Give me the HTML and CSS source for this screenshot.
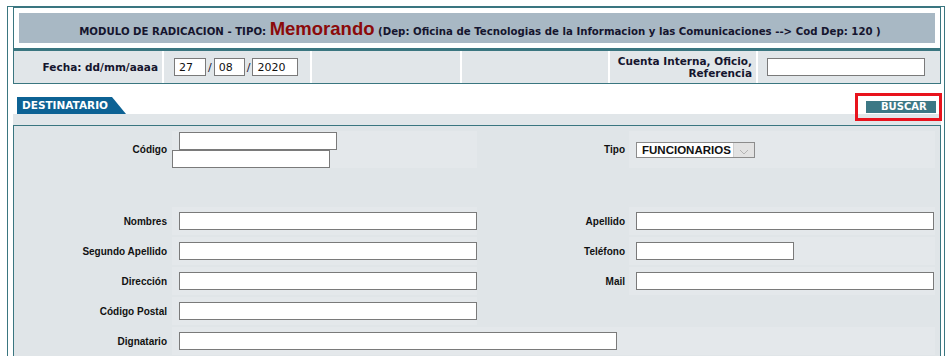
FILE: index.html
```
<!DOCTYPE html>
<html>
    <head>
        <title>Radicacion - Memorando</title>
        <meta charset="UTF-8">
        <link rel="stylesheet" href="styles.css">
    </head>
    <body>
        <div id="frame">
            <div id="head">
                <div id="title">MODULO DE RADICACION - TIPO: <span id="tipo">Memorando</span> (Dep: Oficina de Tecnologias de la Informacion y las Comunicaciones --&gt; Cod Dep: 120 )</div>
            </div>

            <div id="date-row">
                <div class="cell lbl">Fecha: dd/mm/aaaa</div>
                <div class="cell dates">
                    <input class="in dd" type="text" value="27"><span class="sep">/</span><input class="in mm" type="text" value="08"><span class="sep">/</span><input class="in yy" type="text" value="2020">
                </div>
                <div class="cell"></div>
                <div class="cell"></div>
                <div class="cell lbl ref">Cuenta Interna, Oficio,<br>Referencia</div>
                <div class="cell field"><input class="in short" type="text"></div>
            </div>

            <div id="tabs">
                <span class="tab">DESTINATARIO</span>
                <span class="buscar">BUSCAR</span>
            </div>
            <div id="band"></div>

            <div id="box">
                <div id="form">
                    <div class="flbl">Código</div>
                    <div class="fin stack">
                        <input class="in short first" type="text">
                        <input class="in short" type="text">
                    </div>
                    <div class="flbl right">Tipo</div>
                    <div class="fin">
                        <span class="sel">FUNCIONARIOS<span class="arrow"><svg width="10" height="6" viewBox="0 0 10 6"><path d="M1 1 L5 5 L9 1" fill="none" stroke="#b4b4b4" stroke-width="1"/></svg></span></span>
                    </div>

                    <div class="gap"></div>

                    <div class="flbl">Nombres</div>
                    <div class="fin"><input class="in long" type="text"></div>
                    <div class="flbl right">Apellido</div>
                    <div class="fin"><input class="in long" type="text"></div>

                    <div class="flbl">Segundo Apellido</div>
                    <div class="fin"><input class="in long" type="text"></div>
                    <div class="flbl right">Teléfono</div>
                    <div class="fin"><input class="in short" type="text"></div>

                    <div class="flbl">Dirección</div>
                    <div class="fin"><input class="in long" type="text"></div>
                    <div class="flbl right">Mail</div>
                    <div class="fin"><input class="in long" type="text"></div>

                    <div class="flbl">Código Postal</div>
                    <div class="fin"><input class="in long" type="text"></div>
                    <div class="blank"></div>

                    <div class="flbl">Dignatario</div>
                    <div class="fin wide"><input class="in xlong" type="text"></div>
                </div>
            </div>
        </div>
    </body>
</html>
```

FILE: styles.css
```
html, body {
    margin: 0;
    overflow: hidden;
    background-color: white;
}

body {
    font-family: "DejaVu Sans", Verdana, sans-serif;
    font-size: 10px;
    color: #15152e;
}

#frame {
    display: flex;
    flex-direction: column;
    width: 938px;
    height: 350px;
    box-sizing: border-box;
    margin: 6px 0 0 7px;
    padding: 0 3px 0 5px;
    border: 1px solid #3a7680;
    border-bottom: none;
}

/* header */

#head {
    border: 1px solid #3a7680;
    padding: 5px;
    background-color: white;
}

#title {
    height: 30px;
    box-sizing: border-box;
    padding-top: 6px;
    padding-left: 6px;
    line-height: 22px;
    background-color: #a8b8c4;
    text-align: center;
    font-weight: bold;
    font-size: 10.2px;
    white-space: nowrap;
}

#tipo {
    font-family: "Liberation Sans", Arial, sans-serif;
    font-size: 18.5px;
    color: #8b0a0a;
    line-height: 20px;
}

/* fecha row */

#date-row {
    display: grid;
    grid-template-columns: 148px 146px 148px 146px 146px 1fr;
    column-gap: 2px;
    height: 35px;
    box-sizing: border-box;
    border: 1px solid #3a7680;
    border-top-width: 2px;
    background-color: white;
}

#date-row .cell {
    background-color: #e1e6e9;
    display: flex;
    align-items: center;
}

#date-row .lbl {
    justify-content: flex-end;
    padding-right: 4px;
    font-weight: bold;
    font-size: 10.5px;
    text-align: right;
    line-height: 12px;
}

#date-row .dates {
    padding-left: 10px;
}

#date-row .field {
    padding-left: 9px;
}

.sep {
    font-size: 11px;
    margin: 0 2px;
}

.in {
    height: 18px;
    box-sizing: border-box;
    margin: 0;
    padding: 0 4px;
    border: 1px solid #7a7a7a;
    border-radius: 0;
    background-color: white;
    font-family: "DejaVu Sans", Verdana, sans-serif;
    font-size: 11px;
    color: #111;
    outline: none;
}

.dd { width: 32px; }
.mm { width: 31px; }
.yy { width: 46px; }
.short { width: 158px; }
.long { width: 298px; }
.xlong { width: 438px; }

/* destinatario */

#tabs {
    display: flex;
    justify-content: space-between;
    align-items: flex-end;
    margin-top: 13px;
    padding: 0 5px 0 4px;
}

.tab {
    width: 109px;
    height: 17px;
    box-sizing: border-box;
    padding-left: 5px;
    background-color: #0d6294;
    clip-path: polygon(0 0, 95px 0, 100% 100%, 0 100%);
    color: white;
    font-weight: bold;
    font-size: 10.5px;
    line-height: 17px;
}

.buscar {
    position: relative;
    width: 70px;
    height: 12px;
    box-sizing: border-box;
    margin-bottom: 1px;
    padding-left: 15px;
    background-color: #3c7885;
    color: white;
    font-weight: bold;
    line-height: 12px;
    cursor: pointer;
}

.buscar::after {
    content: "";
    position: absolute;
    left: -11px;
    right: -6px;
    top: -8px;
    bottom: -8px;
    border: 3px solid #e8131d;
}

#band {
    height: 11px;
    background-color: #e1e6e9;
}

#box {
    flex: 1;
    border: 1px solid #3a7680;
    border-bottom: none;
    background-color: #e0e5e8;
    padding: 5px 5px 0 5px;
    overflow: hidden;
}

#form {
    display: grid;
    grid-template-columns: 151px 305px 148px 1fr;
    grid-template-rows: 37px 35px 28px 28px 28px 28px 28px;
    gap: 2px;
    font-family: "Liberation Sans", Arial, sans-serif;
    font-size: 10px;
    font-weight: bold;
    color: #111;
}

.flbl {
    display: flex;
    align-items: center;
    justify-content: flex-end;
    padding-right: 3px;
}

.flbl.right {
    padding-right: 2px;
}

.fin {
    display: flex;
    align-items: center;
    padding-left: 7px;
    background-color: #e4e8eb;
}

.fin.stack {
    flex-direction: column;
    align-items: flex-start;
    justify-content: center;
    padding-left: 0;
}

.stack .first {
    margin-left: 7px;
}

.fin.wide {
    grid-column: 2 / 5;
}

.gap {
    grid-column: 1 / 5;
}

.blank {
    grid-column: 3 / 5;
}

.sel {
    display: flex;
    align-items: center;
    width: 119px;
    height: 16px;
    box-sizing: border-box;
    padding-left: 5px;
    border: 1px solid #8c8c8c;
    background-color: white;
    font-size: 11.5px;
    color: #111;
}

.arrow {
    margin-left: auto;
    width: 21px;
    height: 14px;
    display: flex;
    align-items: flex-end;
    justify-content: center;
    padding-bottom: 2px;
    box-sizing: border-box;
    background-color: #e2e2e2;
    border-left: 1px solid #d0d0d0;
}
```
